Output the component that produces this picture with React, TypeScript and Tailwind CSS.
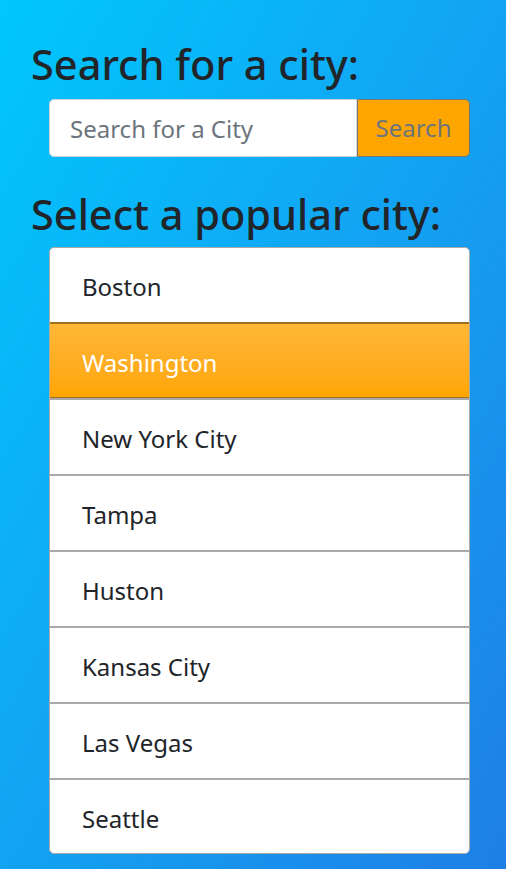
import { useState } from 'react'

const cities = ['Boston', 'Washington', 'New York City', 'Tampa', 'Huston', 'Kansas City', 'Las Vegas', 'Seattle']

export default function App() {
  const [selected, setSelected] = useState('Washington')

  return (
    <div className="min-h-[869px] w-full bg-gradient-to-br from-[#00c7fe] to-[#1e7fe5] font-['Noto_Sans',sans-serif] text-[#212529]">
      <div className="pl-[31px] pr-[36px] pt-[40px] pb-[15px]">
        {/* Search */}
        <h1 className="text-[41.5px] leading-[48px] font-medium">Search for a city:</h1>
        <div className="ml-[18px] mt-[11px] flex h-[58px]">
          <input
            type="text"
            placeholder="Search for a City"
            className="h-full min-w-0 flex-1 rounded-l-[5px] border border-[#ced4da] bg-white px-[20px] text-[24px] text-[#495057] outline-none placeholder:text-[#6c757d]"
          />
          <button className="h-full w-[113px] rounded-r-[5px] border border-[#777] bg-[#ffa500] text-[24px] text-[#6c757d]">
            Search
          </button>
        </div>

        {/* Popular cities */}
        <h2 className="mt-[33px] text-[41.5px] leading-[48px] font-medium">Select a popular city:</h2>
        <ul className="ml-[18px] mt-[9px] overflow-hidden rounded-[5px] border border-[#aaa] bg-white">
          {cities.map((city, i) => {
            const active = city === selected
            const first = i === 0
            const last = i === cities.length - 1
            return (
              <li
                key={city}
                onClick={() => setSelected(city)}
                className={`flex cursor-pointer items-center pl-[32px] pt-[4px] text-[24px] ${
                  first ? 'h-[74px]' : last ? 'h-[75px]' : 'h-[76px]'
                } ${first ? '' : 'border-t-2'} ${
                  active
                    ? 'border-y border-[#a0701a] bg-gradient-to-b from-[#ffb735] to-[#ffa500] text-white'
                    : 'border-[#aaa] text-[#212529]'
                }`}
              >
                {city}
              </li>
            )
          })}
        </ul>
      </div>
    </div>
  )
}
